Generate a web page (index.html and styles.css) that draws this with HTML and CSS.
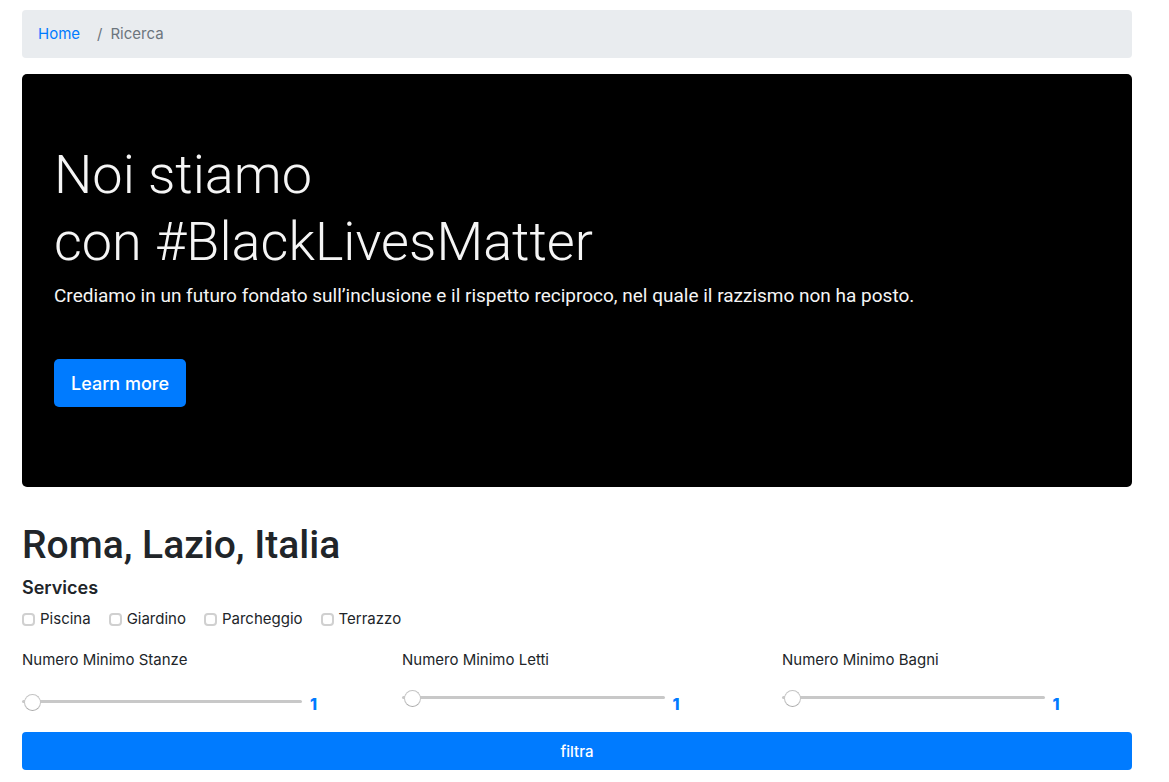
FILE: index.html
```html
<!DOCTYPE html>
<html lang="it">
<head>
<meta charset="utf-8">
<meta name="viewport" content="width=device-width, initial-scale=1">
<title>Ricerca</title>
<link rel="stylesheet" href="styles.css">
</head>
<body>
<main class="page">
  <nav class="breadcrumb" aria-label="breadcrumb">
    <a class="breadcrumb-link" href="#">Home</a>
    <span class="breadcrumb-separator">/</span>
    <span class="breadcrumb-current">Ricerca</span>
  </nav>

  <section class="hero">
    <h1 class="hero-title">Noi stiamo<br>con #BlackLivesMatter</h1>
    <p class="hero-text">Crediamo in un futuro fondato sull’inclusione e il rispetto reciproco, nel quale il razzismo non ha posto.</p>
    <button class="hero-button" type="button">Learn more</button>
  </section>

  <h2 class="place">Roma, Lazio, Italia</h2>

  <form class="filters">
    <h3 class="filters-title">Services</h3>
    <div class="services">
      <label class="service"><input class="service-box" type="checkbox">Piscina</label>
      <label class="service"><input class="service-box" type="checkbox">Giardino</label>
      <label class="service"><input class="service-box" type="checkbox">Parcheggio</label>
      <label class="service"><input class="service-box" type="checkbox">Terrazzo</label>
    </div>
    <div class="ranges">
      <div class="range">
        <label class="range-label" for="rooms">Numero Minimo Stanze</label>
        <div class="range-row"><input class="range-input range-input-wide" id="rooms" type="range" min="1" max="10" value="1"><output class="range-value" for="rooms">1</output></div>
      </div>
      <div class="range">
        <label class="range-label" for="beds">Numero Minimo Letti</label>
        <div class="range-row"><input class="range-input" id="beds" type="range" min="1" max="10" value="1"><output class="range-value" for="beds">1</output></div>
      </div>
      <div class="range">
        <label class="range-label" for="baths">Numero Minimo Bagni</label>
        <div class="range-row"><input class="range-input" id="baths" type="range" min="1" max="10" value="1"><output class="range-value" for="baths">1</output></div>
      </div>
    </div>
    <button class="submit" type="submit">filtra</button>
  </form>
</main>
</body>
</html>
```
FILE: styles.css
```css
* { box-sizing: border-box; }
body {
  margin: 0;
  background: #fff;
  color: #212529;
  font: 15px/24px Inter, "Liberation Sans", sans-serif;
}
.page { padding: 10px 37px 12px 22px; }
.breadcrumb {
  display: flex;
  padding: 12px 16px;
  margin-bottom: 16px;
  border-radius: 4px;
  background: #e9ecef;
  color: #6c757d;
}
.breadcrumb-link { color: #007bff; text-decoration: none; }
.breadcrumb-separator { padding: 0 8px 0 17px; }
.hero {
  padding: 67px 32px 80px;
  margin-bottom: 34px;
  border-radius: 5px;
  background: #000;
  color: #f5f5f5;
  font-family: Roboto, "Liberation Sans", sans-serif;
}
.hero-title { margin: 0 0 6px; font-size: 54px; line-height: 67px; font-weight: 300; }
.hero-text { margin: 0 0 48px; font-size: 19px; line-height: 30px; }
.hero-button {
  display: block;
  height: 48px;
  padding: 2px 17px 0;
  border: 0;
  border-radius: 5px;
  background: #007bff;
  color: #fff;
  font: 500 18px/30px Inter, "Liberation Sans", sans-serif;
}
.place {
  margin: 0 0 6px;
  font: 500 39px/48px Roboto, "Liberation Sans", sans-serif;
}
.filters-title { margin: 0 0 6px; font-size: 18px; line-height: 26px; font-weight: 600; }
.services { display: flex; gap: 18px; margin-bottom: 17px; }
.service { display: flex; align-items: center; gap: 5px; }
.service-box {
  appearance: none;
  width: 13px;
  height: 13px;
  margin: 0;
  border: 2px solid #d0d0d0;
  border-radius: 4px;
  background: #fff;
}
.ranges { display: grid; grid-template-columns: repeat(3, 1fr); gap: 30px; }
.range-label { display: block; margin-bottom: 12px; }
.range-row { display: flex; align-items: flex-start; gap: 8px; height: 36px; }
.range-input {
  appearance: none;
  width: 75%;
  height: 26px;
  margin: 0;
  background: transparent;
}
.range-input-wide { width: 80%; height: 34px; }
.range-input::-webkit-slider-runnable-track {
  height: 3px;
  padding: 0 2px;
  border-radius: 2px;
  background: #c8c8c8;
}
.range-input::-webkit-slider-thumb {
  appearance: none;
  width: 17px;
  height: 17px;
  margin-top: -6px;
  border: 1px solid #c4c4c4;
  border-bottom-color: #aaa;
  border-radius: 50%;
  background: #fff;
}
.range-value {
  padding-top: 8px;
  color: #007bff;
  font-size: 16px;
  font-weight: 800;
}
.submit {
  display: block;
  width: 100%;
  height: 38px;
  padding-top: 2px;
  margin-top: 12px;
  border: 0;
  border-radius: 4px;
  background: #007bff;
  color: #fff;
  font: 500 15px/24px Inter, "Liberation Sans", sans-serif;
}
```
